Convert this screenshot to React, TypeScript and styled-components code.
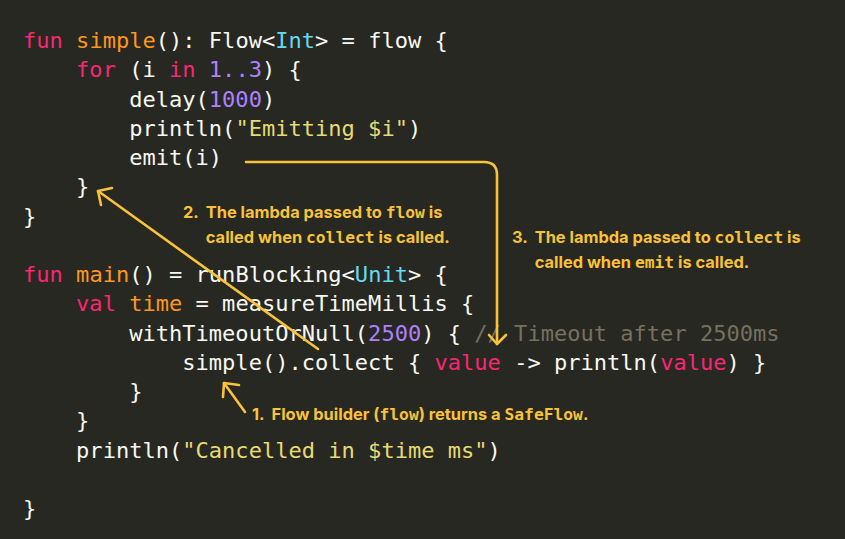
import React from "react";
import styled, { createGlobalStyle } from "styled-components";

const Global = createGlobalStyle`
  html, body { margin: 0; padding: 0; background: #272822; }
  body { width: 845px; height: 539px; overflow: hidden; }
`;

const Canvas = styled.div`
  position: relative;
  width: 845px;
  height: 539px;
  background: #272822;
  overflow: hidden;
`;

const Code = styled.pre`
  margin: 0;
  padding: 26px 0 0 23px;
  font-family: "DejaVu Sans Mono", "Liberation Mono", monospace;
  font-size: 22.05px;
  line-height: 29.25px;
  color: #f8f8f2;
`;

const Line = styled.div`
  height: 29.25px;
  white-space: pre;
`;

type Kind = "kw" | "fn" | "type" | "num" | "str" | "cm" | "tx";
const colors: Record<Kind, string> = {
  kw: "#f92672",
  fn: "#fd971f",
  type: "#66d9ef",
  num: "#ae81ff",
  str: "#e6db74",
  cm: "#75715e",
  tx: "#f8f8f2",
};

const Tok = styled.span<{ $k: Kind }>`
  color: ${(p) => colors[p.$k]};
`;

type T = [Kind, string];
const lines: T[][] = [
  [["kw", "fun"], ["tx", " "], ["fn", "simple"], ["tx", "(): Flow<"], ["type", "Int"], ["tx", "> = flow {"]],
  [["tx", "    "], ["kw", "for"], ["tx", " (i "], ["kw", "in"], ["tx", " "], ["num", "1..3"], ["tx", ") {"]],
  [["tx", "        delay("], ["num", "1000"], ["tx", ")"]],
  [["tx", "        println("], ["str", "\"Emitting $i\""], ["tx", ")"]],
  [["tx", "        emit(i)"]],
  [["tx", "    }"]],
  [["tx", "}"]],
  [],
  [["kw", "fun"], ["tx", " "], ["fn", "main"], ["tx", "() = runBlocking<"], ["type", "Unit"], ["tx", "> {"]],
  [["tx", "    "], ["kw", "val"], ["tx", " "], ["fn", "time"], ["tx", " = measureTimeMillis {"]],
  [["tx", "        withTimeoutOrNull("], ["num", "2500"], ["tx", ") { "], ["cm", "// Timeout after 2500ms"]],
  [["tx", "            simple().collect { "], ["kw", "value"], ["tx", " -> println("], ["kw", "value"], ["tx", ") }"]],
  [["tx", "        }"]],
  [["tx", "    }"]],
  [["tx", "    println("], ["str", "\"Cancelled in $time ms\""], ["tx", ")"]],
  [],
  [["tx", "}"]],
];

const Arrows = styled.svg`
  position: absolute;
  left: 0;
  top: 0;
  pointer-events: none;
`;

const Note = styled.div<{ $x: number; $y: number }>`
  position: absolute;
  left: ${(p) => p.$x}px;
  top: ${(p) => p.$y}px;
  display: grid;
  grid-template-columns: auto auto;
  column-gap: 7px;
  font-family: Inter, "Liberation Sans", sans-serif;
  font-weight: 700;
  font-size: 16.4px;
  line-height: 25px;
  color: #f8c23a;
  white-space: nowrap;
`;

const Num = styled.span``;

const NoteBody = styled.div`
  display: flex;
  flex-direction: column;
`;

const Mono = styled.span`
  font-family: "DejaVu Sans Mono", "Liberation Mono", monospace;
  font-weight: 700;
  font-size: 16.3px;
`;

const Y = "#f8c23a";

export default function App() {
  return (
    <Canvas>
      <Global />
      <Code>
        {lines.map((l, i) => (
          <Line key={i}>
            {l.map(([k, s], j) => (
              <Tok key={j} $k={k}>
                {s}
              </Tok>
            ))}
          </Line>
        ))}
      </Code>
      <Arrows width="845" height="539" viewBox="0 0 845 539">
        <g fill="none" stroke={Y} strokeWidth="2.6" strokeLinecap="round" strokeLinejoin="round">
          <path d="M246 162 H484 Q497 162 497 175 V344" />
          <path d="M489 335 L497 344 L506 335" />
          <path d="M318 349 L98 191" />
          <path d="M112 188 L98 191 L101 205" />
          <path d="M245 412 L224 383" />
          <path d="M239 385 L224 383 L223 397" />
        </g>
      </Arrows>
      <Note $x={183} $y={200}>
        <Num>2.</Num>
        <NoteBody>
          <span>
            The lambda passed to <Mono>flow</Mono> is
          </span>
          <span>
            called when <Mono>collect</Mono> is called.
          </span>
        </NoteBody>
      </Note>
      <Note $x={512} $y={225}>
        <Num>3.</Num>
        <NoteBody>
          <span>
            The lambda passed to <Mono>collect</Mono> is
          </span>
          <span>
            called when <Mono>emit</Mono> is called.
          </span>
        </NoteBody>
      </Note>
      <Note $x={252} $y={402}>
        <Num>1.</Num>
        <NoteBody>
          <span>
            Flow builder (<Mono>flow</Mono>) returns a <Mono>SafeFlow</Mono>.
          </span>
        </NoteBody>
      </Note>
    </Canvas>
  );
}
